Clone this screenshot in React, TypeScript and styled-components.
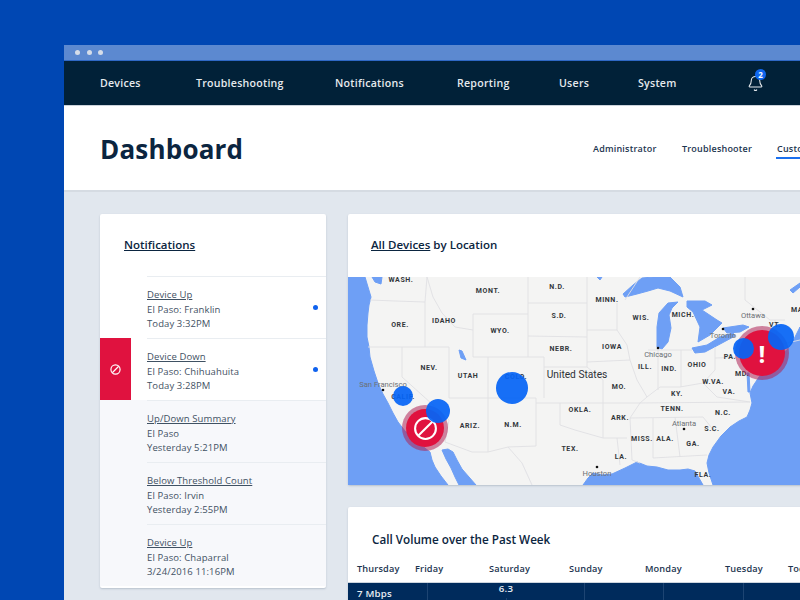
import React from "react";
import styled, { createGlobalStyle } from "styled-components";
import { Bell } from "lucide-react";

const GlobalStyle = createGlobalStyle`
  html, body {
    margin: 0;
    height: 600px;
    overflow: hidden;
    background: #0047b3;
    font-family: "Open Sans", "Liberation Sans", sans-serif;
  }
  * { box-sizing: border-box; }
`;

const Stage = styled.div`
  width: 800px;
  height: 600px;
  overflow: hidden;
  padding: 45px 0 0 64px;
  background: #0047b3;
`;

const Window = styled.div`
  width: 900px;
  height: 700px;
  display: flex;
  flex-direction: column;
  background: #e1e7ee;
`;

const TitleBar = styled.div`
  height: 16px;
  flex: none;
  display: flex;
  align-items: center;
  gap: 6.5px;
  padding: 0 11px;
  background: #5c89d0;
  border-bottom: 1px solid #2f68c4;
`;

const TitleDot = styled.span`
  width: 5px;
  height: 5px;
  border-radius: 50%;
  background: #d5dde9;
`;

const Nav = styled.nav`
  height: 44px;
  flex: none;
  display: flex;
  align-items: center;
  padding: 0 0 1px 36px;
  background: #012138;
  color: #e6eaee;
  font-size: 10.6px;
  font-weight: 600;
  letter-spacing: 0.25px;
`;

const NavItem = styled.a<{ $width: number }>`
  width: ${(p) => p.$width}px;
  flex: none;
  white-space: nowrap;
`;

const BellWrap = styled.div`
  position: relative;
  width: 18px;
  height: 18px;
  margin: 3px 0 0 -3px;
  color: #e6eaee;
`;

const BellBadge = styled.span`
  position: absolute;
  top: -6px;
  left: 8px;
  width: 11px;
  height: 11px;
  border-radius: 50%;
  background: #0f66ee;
  color: #fff;
  font-size: 8px;
  font-weight: 700;
  line-height: 11px;
  letter-spacing: 0;
  text-align: center;
`;

const PageHeader = styled.header`
  height: 87px;
  flex: none;
  display: flex;
  align-items: center;
  padding: 0 0 0 36px;
  background: #fff;
  border-top: 1px solid #ccd3db;
  border-bottom: 2px solid #d5dbe2;
`;

const PageTitle = styled.h1`
  margin: 2px 0 0;
  width: 493px;
  font-size: 26px;
  font-weight: 700;
  letter-spacing: 0.2px;
  color: #0b2540;
`;

const Tab = styled.a<{ $active?: boolean; $width: number }>`
  position: relative;
  width: ${(p) => p.$width}px;
  flex: none;
  font-size: 9px;
  font-weight: 600;
  letter-spacing: 0.2px;
  color: #1c3550;
  white-space: nowrap;
  &::after {
    content: "";
    display: ${(p) => (p.$active ? "block" : "none")};
    position: absolute;
    left: -1px;
    right: 0;
    bottom: -4px;
    height: 2px;
    background: #1a6fee;
  }
`;

const Content = styled.main`
  display: flex;
  align-items: flex-start;
  gap: 22px;
  padding: 22px 0 0 36px;
`;

const Card = styled.section`
  background: #fff;
  border-radius: 2px;
  box-shadow: 0 1px 2px rgba(40, 60, 90, 0.22);
`;

const NotificationCard = styled(Card)`
  width: 226px;
  height: 374px;
  flex: none;
  overflow: hidden;
`;

const CardHeading = styled.h2<{ $left: number; $height: number }>`
  margin: 0;
  height: ${(p) => p.$height}px;
  padding: 22px 0 0 ${(p) => p.$left}px;
  font-size: 11.5px;
  line-height: 17px;
  font-weight: 600;
  color: #0b2540;
  a { text-decoration: underline; }
`;

const NoteRow = styled.div<{ $read?: boolean }>`
  position: relative;
  height: 62px;
  padding-left: 47px;
  background: ${(p) => (p.$read ? "#f7f8fb" : "#fff")};
`;

const NoteBody = styled.div`
  height: 62px;
  padding-top: 11px;
  border-top: 1.5px solid #e9edf1;
  font-size: 9.5px;
  line-height: 14.5px;
  letter-spacing: 0.1px;
  color: #3f5163;
`;

const NoteTitle = styled.a`
  display: block;
  text-decoration: underline;
`;

const NoteLine = styled.div`
  white-space: nowrap;
`;

const UnreadDot = styled.span`
  position: absolute;
  right: 8px;
  top: 29px;
  width: 5px;
  height: 5px;
  border-radius: 50%;
  background: #0f62ee;
`;

const AlertTag = styled.div`
  position: absolute;
  left: 0;
  top: 0;
  bottom: 0;
  width: 31px;
  display: flex;
  align-items: center;
  justify-content: center;
  background: #e0123f;
`;

const MainColumn = styled.div`
  display: flex;
  flex-direction: column;
  gap: 22px;
  width: 520px;
  flex: none;
`;

const MapFrame = styled.div`
  position: relative;
  height: 208px;
  overflow: hidden;
  background: #f4f4f3;
  svg { display: block; }
`;

const Marker = styled.span<{ $x: number; $y: number; $r: number }>`
  position: absolute;
  left: ${(p) => p.$x - 348 - p.$r}px;
  top: ${(p) => p.$y - 277 - p.$r}px;
  width: ${(p) => p.$r * 2}px;
  height: ${(p) => p.$r * 2}px;
  border-radius: 50%;
`;

const BlueMarker = styled(Marker)`
  background: rgba(5, 100, 245, 0.93);
`;

const RedMarker = styled(Marker)`
  display: flex;
  align-items: center;
  justify-content: center;
  background: #e0123f;
  box-shadow: 0 0 0 4px rgba(175, 35, 85, 0.55);
  color: #fff;
  font-size: 24px;
  font-weight: 700;
`;

const ChartCard = styled(Card)`
  height: 200px;
  overflow: hidden;
`;

const ChartTitle = styled.h2`
  margin: 0;
  padding: 24px 0 0 24px;
  height: 51px;
  font-size: 11.7px;
  line-height: 17px;
  font-weight: 600;
  color: #0b2540;
`;

const DayRow = styled.div`
  display: grid;
  grid-template-columns: 58px 74px 80px 76px 80px 63px auto;
  height: 25px;
  padding: 3px 0 0 9px;
  font-size: 9.2px;
  line-height: 15px;
  font-weight: 600;
  letter-spacing: 0.15px;
  color: #1c3550;
  border-bottom: 1px solid #cdd5de;
`;

const Band = styled.div`
  display: grid;
  grid-template-columns: 80px 157px 79px 80px 124px;
  height: 40px;
  background: #002b5c;
  color: #e8edf3;
  font-size: 9.7px;
  font-weight: 600;
  letter-spacing: 0.2px;
`;

const BandCell = styled.div<{ $center?: boolean }>`
  padding: ${(p) => (p.$center ? "0" : "3px 0 0 9px")};
  line-height: ${(p) => (p.$center ? "11px" : "15px")};
  text-align: ${(p) => (p.$center ? "center" : "left")};
  border-right: 1px solid #1d4472;
`;

const Tick = styled.div`
  width: 1px;
  height: 5px;
  margin: 4px auto 0;
  background: #1d4472;
`;

const BanIcon = ({ size, stroke }: { size: number; stroke: number }) => (
  <svg width={size} height={size} viewBox="0 0 24 24" fill="none" stroke="#fff" strokeWidth={stroke}>
    <circle cx="12" cy="12" r="10" />
    <line x1="19" y1="5" x2="5" y2="19" />
  </svg>
);

const stateLines = [
  "370,300 395,301 425,302",
  "427,277 425,302 425,347",
  "427,277 433,297 442,313 455,327 473,330",
  "368,347 449,347 449,398",
  "402,347 402,377 442,413 449,420 445,442 472,452 488,452 508,447 536,446",
  "449,398 536,398",
  "473,314 528,314 528,357 473,357 473,314",
  "488,357 488,452",
  "528,357 544,357 544,398",
  "536,398 536,446",
  "528,277 528,314",
  "528,303 587,303",
  "528,336 587,337",
  "544,367 587,367",
  "536,403 603,403 637,403 750,402",
  "560,403 560,425 575,430 603,438",
  "508,447 522,463 532,485",
  "587,277 587,367 603,380 603,438 627,438",
  "617,303 617,330 587,330",
  "617,330 627,345 630,360 587,362",
  "630,360 637,380 647,397 640,403 630,418 703,417",
  "648,350 680,350 692,350",
  "658,350 658,390",
  "681,350 681,387",
  "715,347 715,370 703,383 680,387 660,387 647,397",
  "715,358 747,357",
  "703,383 717,397 750,402",
  "630,418 632,460 640,463",
  "653,418 653,458",
  "675,417 680,457",
  "653,458 707,455",
  "703,417 715,432",
  "617,438 620,465",
  "640,277 625,300",
  "745,277 745,300 770,320 785,320",
  "775,320 778,345 800,340",
];

const stateLabels: [string, number, number][] = [
  ["WASH.", 401, 282], ["MONT.", 488, 293], ["N.D.", 557, 289], ["ORE.", 400, 327],
  ["IDAHO", 444, 323], ["WYO.", 500, 333], ["S.D.", 559, 318], ["NEBR.", 561, 351],
  ["NEV.", 429, 370], ["UTAH", 468, 378], ["CALIF.", 403, 399], ["COLO.", 516, 379],
  ["ARIZ.", 470, 428], ["N.M.", 513, 427], ["TEX.", 570, 451], ["MINN.", 607, 302],
  ["WIS.", 641, 320], ["MICH.", 683, 317], ["IOWA", 612, 349], ["ILL.", 645, 369],
  ["IND.", 669, 371], ["OHIO", 697, 367], ["PA.", 730, 359], ["MD.", 742, 376],
  ["W.VA.", 713, 384], ["VA.", 729, 394], ["MO.", 619, 389], ["KY.", 677, 396],
  ["TENN.", 672, 411], ["N.C.", 723, 415], ["OKLA.", 580, 412], ["ARK.", 620, 420],
  ["S.C.", 712, 431], ["MISS.", 642, 441], ["ALA.", 665, 441], ["GA.", 693, 446],
  ["LA.", 621, 459], ["FLA.", 703, 477], ["VT.", 775, 327], ["MA", 797, 312],
];

const cities: [string, number, number, number, number][] = [
  ["San Francisco", 383, 387, 383, 390],
  ["Chicago", 658, 357, 658, 348],
  ["Toronto", 723, 338, 723, 329],
  ["Ottawa", 753, 318, 753, 309],
  ["Atlanta", 684, 426, 684, 429],
  ["Houston", 597, 476, 597, 467],
];

const waterShapes = [
  "348,277 365,277 368,287 371,297 369,305 368,313 367,325 367,337 369,347 370,357 374,371 378,383 383,394 388,403 393,413 398,422 405,431 412,437 421,445 430,452 432,460 435,467 441,476 448,485 348,485",
  "442,450 448,449 453,452 457,460 462,469 469,477 476,485 459,485 455,477 451,468 446,459",
  "583,485 588,478 593,473 602,475 612,474 625,468 637,462 647,466 657,467 668,470 680,470 688,469 695,471 699,478 703,485",
  "713,485 709,473 707,463 709,455 713,447 721,436 730,427 739,421 747,417 750,410 752,403 751,398 750,393 753,386 757,380 763,371 770,363 778,356 787,350 794,339 800,327 800,485",
  "623,294 633,285 642,278 653,277 670,277 680,287 683,297 670,291 658,288 648,291 637,294 625,297",
  "657,347 657,327 659,313 668,303 678,302 672,308 669,315 671,328 668,342 662,349",
  "687,301 705,301 712,305 702,310 717,320 722,323 710,335 698,342 700,327 693,312 687,307",
  "692,348 707,345 720,337 733,333 735,336 722,343 705,352 695,353",
  "723,328 743,325 749,327 740,332 727,333",
  "459,350 462,351 466,360 461,358",
  "372,277 382,277 381,284 375,282",
  "790,290 800,283 800,287 793,293",
  "747,373 749,373 750,392 748,392",
  "597,277 602,277 600,280",
];

const UsMap = () => (
  <svg width="452" height="208" viewBox="348 277 452 208">
    {waterShapes.map((points) => (
      <polygon key={points} points={points} fill="#6e9ff5" stroke="#6e9ff5" strokeWidth="1" strokeLinejoin="round" />
    ))}
    {stateLines.map((points) => (
      <polyline key={points} points={points} fill="none" stroke="#e0e0e3" strokeWidth="0.9" />
    ))}
    {stateLabels.map(([label, x, y]) => (
      <text key={label} x={x} y={y} textAnchor="middle" fontFamily="Roboto, sans-serif" fontSize="7" fontWeight="700" letterSpacing="0.6" fill="#33373b">
        {label}
      </text>
    ))}
    {cities.map(([label, x, y, dotX, dotY]) => (
      <g key={label}>
        <circle cx={dotX} cy={dotY} r="1.3" fill="#111" />
        <text x={x} y={y} textAnchor="middle" fontFamily="Roboto, sans-serif" fontSize="7.6" fill="#6b6f74">
          {label}
        </text>
      </g>
    ))}
    <text x="577" y="378" textAnchor="middle" fontFamily="Roboto, sans-serif" fontSize="10.2" fill="#2e3236">
      United States
    </text>
  </svg>
);

const notes = [
  { title: "Device Up", place: "El Paso: Franklin", time: "Today 3:32PM", unread: true },
  { title: "Device Down", place: "El Paso: Chihuahuita", time: "Today 3:28PM", unread: true, alert: true },
  { title: "Up/Down Summary", place: "El Paso", time: "Yesterday 5:21PM" },
  { title: "Below Threshold Count", place: "El Paso: Irvin", time: "Yesterday 2:55PM" },
  { title: "Device Up", place: "El Paso: Chaparral", time: "3/24/2016 11:16PM" },
];

const navItems: [string, number][] = [
  ["Devices", 96],
  ["Troubleshooting", 139],
  ["Notifications", 122],
  ["Reporting", 102],
  ["Users", 79],
  ["System", 112],
];

const days = ["Thursday", "Friday", "Saturday", "Sunday", "Monday", "Tuesday", "Today"];

export default function App() {
  return (
    <>
      <GlobalStyle />
      <Stage>
        <Window>
          <TitleBar>
            <TitleDot />
            <TitleDot />
            <TitleDot />
          </TitleBar>
          <Nav>
            {navItems.map(([label, width]) => (
              <NavItem key={label} $width={width}>{label}</NavItem>
            ))}
            <BellWrap>
              <Bell size={17} strokeWidth={1.5} />
              <BellBadge>2</BellBadge>
            </BellWrap>
          </Nav>
          <PageHeader>
            <PageTitle>Dashboard</PageTitle>
            <Tab $width={89}>Administrator</Tab>
            <Tab $width={95}>Troubleshooter</Tab>
            <Tab $width={60} $active>Customer</Tab>
          </PageHeader>
          <Content>
            <NotificationCard>
              <CardHeading $left={24} $height={62}>
                <a>Notifications</a>
              </CardHeading>
              {notes.map((note) => (
                <NoteRow key={note.place} $read={!note.unread}>
                  {note.alert && (
                    <AlertTag>
                      <BanIcon size={11} stroke={2.6} />
                    </AlertTag>
                  )}
                  <NoteBody>
                    <NoteTitle>{note.title}</NoteTitle>
                    <NoteLine>{note.place}</NoteLine>
                    <NoteLine>{note.time}</NoteLine>
                  </NoteBody>
                  {note.unread && <UnreadDot />}
                </NoteRow>
              ))}
            </NotificationCard>
            <MainColumn>
              <Card>
                <CardHeading $left={23} $height={63}>
                  <a>All Devices</a> by Location
                </CardHeading>
                <MapFrame>
                  <UsMap />
                  <BlueMarker $x={403} $y={396} $r={10} />
                  <RedMarker $x={425} $y={428} $r={19}>
                    <BanIcon size={25} stroke={2} />
                  </RedMarker>
                  <BlueMarker $x={438} $y={411} $r={12} />
                  <BlueMarker $x={512} $y={388} $r={16} />
                  <RedMarker $x={762} $y={353} $r={23}>!</RedMarker>
                  <BlueMarker $x={743} $y={348} $r={10.5} />
                  <BlueMarker $x={781} $y={337} $r={13} />
                </MapFrame>
              </Card>
              <ChartCard>
                <ChartTitle>Call Volume over the Past Week</ChartTitle>
                <DayRow>
                  {days.map((day) => (
                    <span key={day}>{day}</span>
                  ))}
                </DayRow>
                <Band>
                  <BandCell>7 Mbps</BandCell>
                  <BandCell $center>
                    6.3
                    <Tick />
                  </BandCell>
                  <BandCell />
                  <BandCell />
                  <BandCell />
                </Band>
              </ChartCard>
            </MainColumn>
          </Content>
        </Window>
      </Stage>
    </>
  );
}
